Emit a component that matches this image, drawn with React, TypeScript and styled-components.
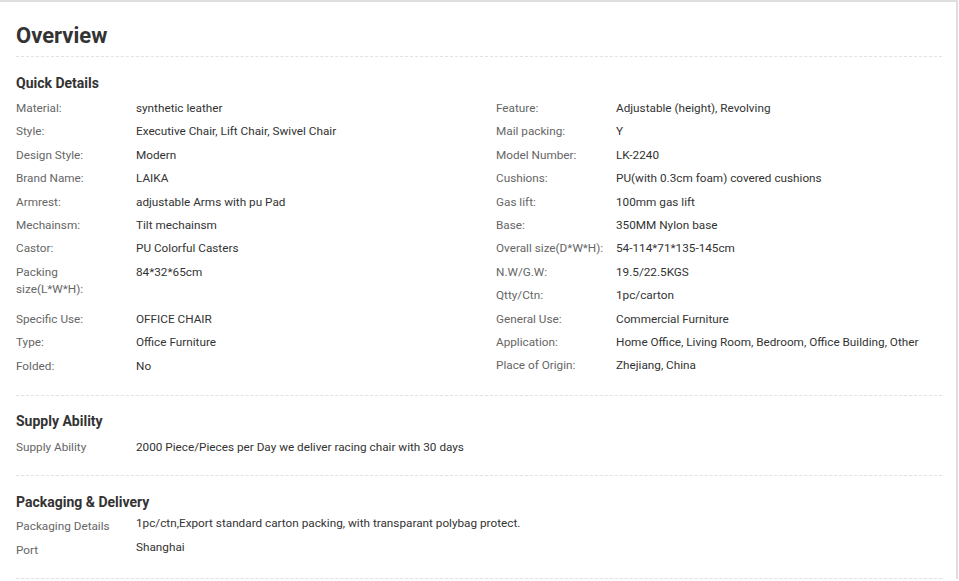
import React from "react";
import styled, { createGlobalStyle } from "styled-components";

const GlobalStyle = createGlobalStyle`
  html, body { margin: 0; padding: 0; background: #fff; }
  body { font-family: Roboto, "Liberation Sans", Arial, sans-serif; color: #333; }
  * { box-sizing: border-box; }
`;

const Panel = styled.div`
  width: 958px;
  border-top: 2px solid #dedede;
  border-right: 2px solid #dedede;
  padding: 0 14px 0 16px;
  background: #fff;
`;

const Title = styled.h2`
  margin: 0;
  padding: 19px 0 5px;
  font-size: 22px;
  line-height: 30px;
  font-weight: 700;
  color: #333;
  border-bottom: 1px dashed #e2e2e2;
`;

const Section = styled.section<{ $top?: number; $bottom: number }>`
  padding: ${(p) => p.$top ?? 16}px 0 ${(p) => p.$bottom}px;
  border-bottom: 1px dashed #e2e2e2;
`;

const SectionTitle = styled.h3<{ $gap?: number }>`
  margin: 0 0 ${(p) => p.$gap ?? 4}px;
  font-size: 14px;
  line-height: 20px;
  font-weight: 700;
  color: #333;
`;

const Columns = styled.div`
  display: flex;
`;

const Column = styled.div`
  width: 480px;
  flex-shrink: 0;
  display: flex;
  flex-direction: column;
`;

const Item = styled.div<{ $tall?: boolean }>`
  display: flex;
  height: ${(p) => (p.$tall ? "47px" : "23.4px")};
  font-size: 11.75px;
  line-height: 17.4px;
`;

const Label = styled.div`
  width: 120px;
  flex-shrink: 0;
  padding: 3px 11px 0 0;
  color: #666;
`;

const Value = styled.div<{ $flush?: boolean }>`
  flex: 1;
  padding-top: ${(p) => (p.$flush ? "0" : "3px")};
  color: #333;
  white-space: nowrap;
`;

type Row = [string, string, boolean?];

const left: Row[] = [
  ["Material:", "synthetic leather"],
  ["Style:", "Executive Chair, Lift Chair, Swivel Chair"],
  ["Design Style:", "Modern"],
  ["Brand Name:", "LAIKA"],
  ["Armrest:", "adjustable Arms with pu Pad"],
  ["Mechainsm:", "Tilt mechainsm"],
  ["Castor:", "PU Colorful Casters"],
  ["Packing size(L*W*H):", "84*32*65cm", true],
  ["Specific Use:", "OFFICE CHAIR"],
  ["Type:", "Office Furniture"],
  ["Folded:", "No"],
];

const right: Row[] = [
  ["Feature:", "Adjustable (height), Revolving"],
  ["Mail packing:", "Y"],
  ["Model Number:", "LK-2240"],
  ["Cushions:", "PU(with 0.3cm foam) covered cushions"],
  ["Gas lift:", "100mm gas lift"],
  ["Base:", "350MM Nylon base"],
  ["Overall size(D*W*H):", "54-114*71*135-145cm"],
  ["N.W/G.W:", "19.5/22.5KGS"],
  ["Qtty/Ctn:", "1pc/carton"],
  ["General Use:", "Commercial Furniture"],
  ["Application:", "Home Office, Living Room, Bedroom, Office Building, Other"],
  ["Place of Origin:", "Zhejiang, China"],
];

const renderRows = (rows: Row[]) =>
  rows.map(([k, v, tall]) => (
    <Item key={k} $tall={tall}>
      <Label>{k}</Label>
      <Value>{v}</Value>
    </Item>
  ));

export default function App() {
  return (
    <>
      <GlobalStyle />
      <Panel>
        <Title>Overview</Title>
        <Section $bottom={17}>
          <SectionTitle>Quick Details</SectionTitle>
          <Columns>
            <Column>{renderRows(left)}</Column>
            <Column>{renderRows(right)}</Column>
          </Columns>
        </Section>
        <Section $top={15} $bottom={16}>
          <SectionTitle $gap={5}>Supply Ability</SectionTitle>
          <Item>
            <Label>Supply Ability</Label>
            <Value>2000 Piece/Pieces per Day we deliver racing chair with 30 days</Value>
          </Item>
        </Section>
        <Section $bottom={16}>
          <SectionTitle $gap={3}>Packaging &amp; Delivery</SectionTitle>
          <Item>
            <Label>Packaging Details</Label>
            <Value $flush>1pc/ctn,Export standard carton packing, with transparant polybag protect.</Value>
          </Item>
          <Item>
            <Label>Port</Label>
            <Value $flush>Shanghai</Value>
          </Item>
        </Section>
      </Panel>
    </>
  );
}
